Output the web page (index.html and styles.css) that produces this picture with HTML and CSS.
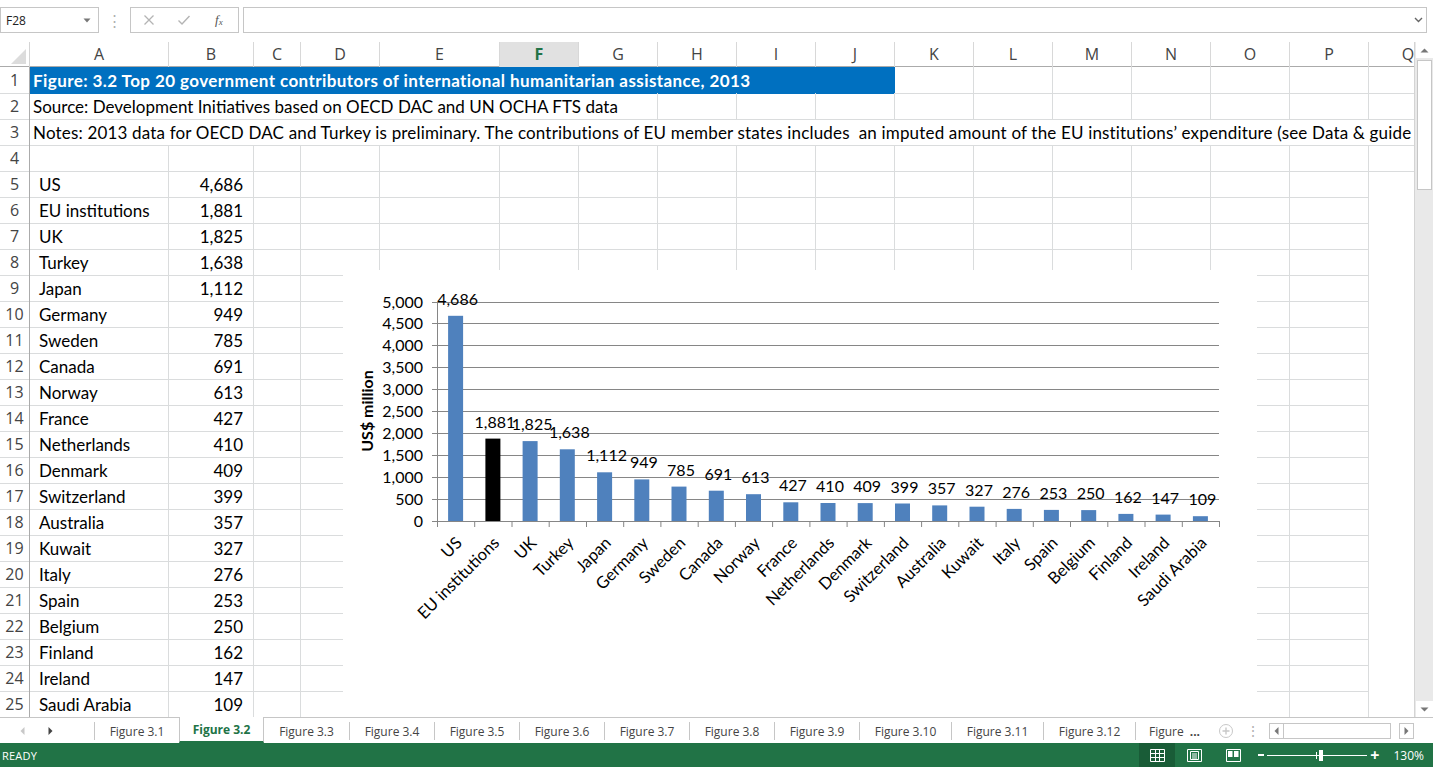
FILE: index.html
```html
<!DOCTYPE html>
<html>
<head>
<meta charset="utf-8">
<title>Figure 3.2</title>
<link rel="stylesheet" href="styles.css">
</head>
<body>
<div class="app">
  <div class="formula-bar">
    <div class="namebox"><span>F28</span><svg class="nb-arrow" width="8" height="5" viewBox="0 0 8 5"><path d="M0.5 0.5 L7.5 0.5 L4 4.5 Z" fill="#777"/></svg></div>
    <div class="fb-dots">⋮</div>
    <div class="fx-box">
      <svg width="12" height="12" viewBox="0 0 12 12"><path d="M1.5 1.5 L10.5 10.5 M10.5 1.5 L1.5 10.5" stroke="#b4b4b4" stroke-width="1.3"/></svg>
      <svg width="14" height="12" viewBox="0 0 14 12"><path d="M1.5 6.5 L5 10 L12.5 2" stroke="#b4b4b4" stroke-width="1.4" fill="none"/></svg>
      <span class="fx">f<sub>x</sub></span>
    </div>
    <div class="formula-input"><svg class="fi-chev" width="9" height="6" viewBox="0 0 9 6"><path d="M1 1 L4.5 4.5 L8 1" stroke="#666" stroke-width="1.4" fill="none"/></svg></div>
  </div>

  <div class="sheet">
    <div class="sheet-main">
      <div class="colhead">
        <div class="corner"><svg width="30" height="25" viewBox="0 0 30 25"><polygon points="26,7 26,22 11,22" fill="#dcdcdc"/></svg></div>
        <div class="h">A</div><div class="h">B</div><div class="h">C</div><div class="h">D</div><div class="h">E</div>
        <div class="h sel">F</div><div class="h">G</div><div class="h">H</div><div class="h">I</div><div class="h">J</div>
        <div class="h">K</div><div class="h">L</div><div class="h">M</div><div class="h">N</div><div class="h">O</div>
        <div class="h">P</div><div class="h">Q</div>
      </div>

      <div class="grid">
        <div class="row"><div class="rn">1</div><div class="c title span10">Figure: 3.2 Top 20 government contributors of international humanitarian assistance, 2013</div><div class="c"></div><div class="c"></div><div class="c"></div><div class="c"></div><div class="c"></div><div class="c"></div><div class="c"></div></div>
        <div class="row"><div class="rn">2</div><div class="c txt span7">Source: Development Initiatives based on OECD DAC and UN OCHA FTS data</div><div class="c"></div><div class="c"></div><div class="c"></div><div class="c"></div><div class="c"></div><div class="c"></div><div class="c"></div><div class="c"></div><div class="c"></div><div class="c"></div></div>
        <div class="row"><div class="rn">3</div><div class="c txt notes span17">Notes: 2013 data for OECD DAC and Turkey is preliminary. The contributions of EU member states includes&nbsp; an imputed amount of the EU institutions’ expenditure (see Data &amp; guide</div></div>
        <div class="row"><div class="rn">4</div><div class="c"></div><div class="c"></div><div class="c"></div><div class="c"></div><div class="c"></div><div class="c"></div><div class="c"></div><div class="c"></div><div class="c"></div><div class="c"></div><div class="c"></div><div class="c"></div><div class="c"></div><div class="c"></div><div class="c"></div><div class="c"></div><div class="c"></div></div>
        <div class="row"><div class="rn">5</div><div class="c name">US</div><div class="c num">4,686</div><div class="c"></div><div class="c"></div><div class="c"></div><div class="c"></div><div class="c"></div><div class="c"></div><div class="c"></div><div class="c"></div><div class="c"></div><div class="c"></div><div class="c"></div><div class="c"></div><div class="c"></div><div class="c"></div></div>
        <div class="row"><div class="rn">6</div><div class="c name">EU institutions</div><div class="c num">1,881</div><div class="c"></div><div class="c"></div><div class="c"></div><div class="c"></div><div class="c"></div><div class="c"></div><div class="c"></div><div class="c"></div><div class="c"></div><div class="c"></div><div class="c"></div><div class="c"></div><div class="c"></div><div class="c"></div></div>
        <div class="row"><div class="rn">7</div><div class="c name">UK</div><div class="c num">1,825</div><div class="c"></div><div class="c"></div><div class="c"></div><div class="c"></div><div class="c"></div><div class="c"></div><div class="c"></div><div class="c"></div><div class="c"></div><div class="c"></div><div class="c"></div><div class="c"></div><div class="c"></div><div class="c"></div></div>
        <div class="row"><div class="rn">8</div><div class="c name">Turkey</div><div class="c num">1,638</div><div class="c"></div><div class="c"></div><div class="c"></div><div class="c"></div><div class="c"></div><div class="c"></div><div class="c"></div><div class="c"></div><div class="c"></div><div class="c"></div><div class="c"></div><div class="c"></div><div class="c"></div><div class="c"></div></div>
        <div class="row"><div class="rn">9</div><div class="c name">Japan</div><div class="c num">1,112</div><div class="c"></div><div class="c"></div><div class="c"></div><div class="c"></div><div class="c"></div><div class="c"></div><div class="c"></div><div class="c"></div><div class="c"></div><div class="c"></div><div class="c"></div><div class="c"></div><div class="c"></div><div class="c"></div></div>
        <div class="row"><div class="rn">10</div><div class="c name">Germany</div><div class="c num">949</div><div class="c"></div><div class="c"></div><div class="c"></div><div class="c"></div><div class="c"></div><div class="c"></div><div class="c"></div><div class="c"></div><div class="c"></div><div class="c"></div><div class="c"></div><div class="c"></div><div class="c"></div><div class="c"></div></div>
        <div class="row"><div class="rn">11</div><div class="c name">Sweden</div><div class="c num">785</div><div class="c"></div><div class="c"></div><div class="c"></div><div class="c"></div><div class="c"></div><div class="c"></div><div class="c"></div><div class="c"></div><div class="c"></div><div class="c"></div><div class="c"></div><div class="c"></div><div class="c"></div><div class="c"></div></div>
        <div class="row"><div class="rn">12</div><div class="c name">Canada</div><div class="c num">691</div><div class="c"></div><div class="c"></div><div class="c"></div><div class="c"></div><div class="c"></div><div class="c"></div><div class="c"></div><div class="c"></div><div class="c"></div><div class="c"></div><div class="c"></div><div class="c"></div><div class="c"></div><div class="c"></div></div>
        <div class="row"><div class="rn">13</div><div class="c name">Norway</div><div class="c num">613</div><div class="c"></div><div class="c"></div><div class="c"></div><div class="c"></div><div class="c"></div><div class="c"></div><div class="c"></div><div class="c"></div><div class="c"></div><div class="c"></div><div class="c"></div><div class="c"></div><div class="c"></div><div class="c"></div></div>
        <div class="row"><div class="rn">14</div><div class="c name">France</div><div class="c num">427</div><div class="c"></div><div class="c"></div><div class="c"></div><div class="c"></div><div class="c"></div><div class="c"></div><div class="c"></div><div class="c"></div><div class="c"></div><div class="c"></div><div class="c"></div><div class="c"></div><div class="c"></div><div class="c"></div></div>
        <div class="row"><div class="rn">15</div><div class="c name">Netherlands</div><div class="c num">410</div><div class="c"></div><div class="c"></div><div class="c"></div><div class="c"></div><div class="c"></div><div class="c"></div><div class="c"></div><div class="c"></div><div class="c"></div><div class="c"></div><div class="c"></div><div class="c"></div><div class="c"></div><div class="c"></div></div>
        <div class="row"><div class="rn">16</div><div class="c name">Denmark</div><div class="c num">409</div><div class="c"></div><div class="c"></div><div class="c"></div><div class="c"></div><div class="c"></div><div class="c"></div><div class="c"></div><div class="c"></div><div class="c"></div><div class="c"></div><div class="c"></div><div class="c"></div><div class="c"></div><div class="c"></div></div>
        <div class="row"><div class="rn">17</div><div class="c name">Switzerland</div><div class="c num">399</div><div class="c"></div><div class="c"></div><div class="c"></div><div class="c"></div><div class="c"></div><div class="c"></div><div class="c"></div><div class="c"></div><div class="c"></div><div class="c"></div><div class="c"></div><div class="c"></div><div class="c"></div><div class="c"></div></div>
        <div class="row"><div class="rn">18</div><div class="c name">Australia</div><div class="c num">357</div><div class="c"></div><div class="c"></div><div class="c"></div><div class="c"></div><div class="c"></div><div class="c"></div><div class="c"></div><div class="c"></div><div class="c"></div><div class="c"></div><div class="c"></div><div class="c"></div><div class="c"></div><div class="c"></div></div>
        <div class="row"><div class="rn">19</div><div class="c name">Kuwait</div><div class="c num">327</div><div class="c"></div><div class="c"></div><div class="c"></div><div class="c"></div><div class="c"></div><div class="c"></div><div class="c"></div><div class="c"></div><div class="c"></div><div class="c"></div><div class="c"></div><div class="c"></div><div class="c"></div><div class="c"></div></div>
        <div class="row"><div class="rn">20</div><div class="c name">Italy</div><div class="c num">276</div><div class="c"></div><div class="c"></div><div class="c"></div><div class="c"></div><div class="c"></div><div class="c"></div><div class="c"></div><div class="c"></div><div class="c"></div><div class="c"></div><div class="c"></div><div class="c"></div><div class="c"></div><div class="c"></div></div>
        <div class="row"><div class="rn">21</div><div class="c name">Spain</div><div class="c num">253</div><div class="c"></div><div class="c"></div><div class="c"></div><div class="c"></div><div class="c"></div><div class="c"></div><div class="c"></div><div class="c"></div><div class="c"></div><div class="c"></div><div class="c"></div><div class="c"></div><div class="c"></div><div class="c"></div></div>
        <div class="row"><div class="rn">22</div><div class="c name">Belgium</div><div class="c num">250</div><div class="c"></div><div class="c"></div><div class="c"></div><div class="c"></div><div class="c"></div><div class="c"></div><div class="c"></div><div class="c"></div><div class="c"></div><div class="c"></div><div class="c"></div><div class="c"></div><div class="c"></div><div class="c"></div></div>
        <div class="row"><div class="rn">23</div><div class="c name">Finland</div><div class="c num">162</div><div class="c"></div><div class="c"></div><div class="c"></div><div class="c"></div><div class="c"></div><div class="c"></div><div class="c"></div><div class="c"></div><div class="c"></div><div class="c"></div><div class="c"></div><div class="c"></div><div class="c"></div><div class="c"></div></div>
        <div class="row"><div class="rn">24</div><div class="c name">Ireland</div><div class="c num">147</div><div class="c"></div><div class="c"></div><div class="c"></div><div class="c"></div><div class="c"></div><div class="c"></div><div class="c"></div><div class="c"></div><div class="c"></div><div class="c"></div><div class="c"></div><div class="c"></div><div class="c"></div><div class="c"></div></div>
        <div class="row"><div class="rn">25</div><div class="c name">Saudi Arabia</div><div class="c num">109</div><div class="c"></div><div class="c"></div><div class="c"></div><div class="c"></div><div class="c"></div><div class="c"></div><div class="c"></div><div class="c"></div><div class="c"></div><div class="c"></div><div class="c"></div><div class="c"></div><div class="c"></div><div class="c"></div></div>

        <div class="chart">
          <svg width="914" height="460" viewBox="343 270 914 460">
            <g class="gridlines" stroke="#868686" stroke-width="1">
              <line x1="432" y1="499.5" x2="1219" y2="499.5"/>
              <line x1="432" y1="477.5" x2="1219" y2="477.5"/>
              <line x1="432" y1="455.5" x2="1219" y2="455.5"/>
              <line x1="432" y1="433.5" x2="1219" y2="433.5"/>
              <line x1="432" y1="411.5" x2="1219" y2="411.5"/>
              <line x1="432" y1="389.5" x2="1219" y2="389.5"/>
              <line x1="432" y1="367.5" x2="1219" y2="367.5"/>
              <line x1="432" y1="345.5" x2="1219" y2="345.5"/>
              <line x1="432" y1="323.5" x2="1219" y2="323.5"/>
              <line x1="432" y1="302.5" x2="1219" y2="302.5"/>
              <line x1="437.5" y1="302" x2="437.5" y2="521"/>
            </g>
            <g class="bars" fill="#4f81bd">
              <rect x="448.1" y="315.8" width="15" height="205.2"/>
              <rect x="485.4" y="438.6" width="15" height="82.4" fill="#000"/>
              <rect x="522.6" y="441.1" width="15" height="79.9"/>
              <rect x="559.8" y="449.3" width="15" height="71.7"/>
              <rect x="597.1" y="472.3" width="15" height="48.7"/>
              <rect x="634.3" y="479.4" width="15" height="41.6"/>
              <rect x="671.5" y="486.6" width="15" height="34.4"/>
              <rect x="708.8" y="490.7" width="15" height="30.3"/>
              <rect x="746.0" y="494.2" width="15" height="26.8"/>
              <rect x="783.3" y="502.3" width="15" height="18.7"/>
              <rect x="820.5" y="503.0" width="15" height="18.0"/>
              <rect x="857.7" y="503.1" width="15" height="17.9"/>
              <rect x="895.0" y="503.5" width="15" height="17.5"/>
              <rect x="932.2" y="505.4" width="15" height="15.6"/>
              <rect x="969.5" y="506.7" width="15" height="14.3"/>
              <rect x="1006.7" y="508.9" width="15" height="12.1"/>
              <rect x="1043.9" y="509.9" width="15" height="11.1"/>
              <rect x="1081.2" y="510.1" width="15" height="10.9"/>
              <rect x="1118.4" y="513.9" width="15" height="7.1"/>
              <rect x="1155.6" y="514.6" width="15" height="6.4"/>
              <rect x="1192.9" y="516.2" width="15" height="4.8"/>
            </g>
            <g class="axis" stroke="#868686" stroke-width="1">
              <line x1="432" y1="521.5" x2="1219" y2="521.5"/>
              <line x1="437.5" y1="521" x2="437.5" y2="527"/>
              <line x1="474.7" y1="521" x2="474.7" y2="527"/>
              <line x1="512.0" y1="521" x2="512.0" y2="527"/>
              <line x1="549.2" y1="521" x2="549.2" y2="527"/>
              <line x1="586.5" y1="521" x2="586.5" y2="527"/>
              <line x1="623.7" y1="521" x2="623.7" y2="527"/>
              <line x1="660.9" y1="521" x2="660.9" y2="527"/>
              <line x1="698.2" y1="521" x2="698.2" y2="527"/>
              <line x1="735.4" y1="521" x2="735.4" y2="527"/>
              <line x1="772.6" y1="521" x2="772.6" y2="527"/>
              <line x1="809.9" y1="521" x2="809.9" y2="527"/>
              <line x1="847.1" y1="521" x2="847.1" y2="527"/>
              <line x1="884.4" y1="521" x2="884.4" y2="527"/>
              <line x1="921.6" y1="521" x2="921.6" y2="527"/>
              <line x1="958.8" y1="521" x2="958.8" y2="527"/>
              <line x1="996.1" y1="521" x2="996.1" y2="527"/>
              <line x1="1033.3" y1="521" x2="1033.3" y2="527"/>
              <line x1="1070.5" y1="521" x2="1070.5" y2="527"/>
              <line x1="1107.8" y1="521" x2="1107.8" y2="527"/>
              <line x1="1145.0" y1="521" x2="1145.0" y2="527"/>
              <line x1="1182.3" y1="521" x2="1182.3" y2="527"/>
              <line x1="1219.5" y1="521" x2="1219.5" y2="527"/>
            </g>
            <g class="ylabels" text-anchor="end">
              <text x="423" y="527">0</text>
              <text x="423" y="505">500</text>
              <text x="423" y="483">1,000</text>
              <text x="423" y="461">1,500</text>
              <text x="423" y="439">2,000</text>
              <text x="423" y="417">2,500</text>
              <text x="423" y="395">3,000</text>
              <text x="423" y="373">3,500</text>
              <text x="423" y="351">4,000</text>
              <text x="423" y="329">4,500</text>
              <text x="423" y="308">5,000</text>
            </g>
            <text class="ytitle" transform="translate(373 411) rotate(-90)" text-anchor="middle">US$ million</text>
            <g class="dlabels" text-anchor="middle">
              <text x="457.6" y="304.7">4,686</text>
              <text x="494.9" y="427.6">1,881</text>
              <text x="532.1" y="430.1">1,825</text>
              <text x="569.3" y="438.3">1,638</text>
              <text x="606.6" y="461.3">1,112</text>
              <text x="643.8" y="468.4">949</text>
              <text x="681.0" y="475.6">785</text>
              <text x="718.3" y="479.7">691</text>
              <text x="755.5" y="483.2">613</text>
              <text x="792.8" y="491.3">427</text>
              <text x="830.0" y="492.0">410</text>
              <text x="867.2" y="492.1">409</text>
              <text x="904.5" y="492.5">399</text>
              <text x="941.7" y="494.4">357</text>
              <text x="979.0" y="495.7">327</text>
              <text x="1016.2" y="497.9">276</text>
              <text x="1053.4" y="498.9">253</text>
              <text x="1090.7" y="499.1">250</text>
              <text x="1127.9" y="502.9">162</text>
              <text x="1165.1" y="503.6">147</text>
              <text x="1202.4" y="505.2">109</text>
            </g>
            <g class="cats" text-anchor="end">
              <text transform="translate(463 544) rotate(-45)">US</text>
              <text transform="translate(500.3 544) rotate(-45)">EU institutions</text>
              <text transform="translate(537.5 544) rotate(-45)">UK</text>
              <text transform="translate(574.7 544) rotate(-45)">Turkey</text>
              <text transform="translate(612.0 544) rotate(-45)">Japan</text>
              <text transform="translate(649.2 544) rotate(-45)">Germany</text>
              <text transform="translate(686.4 544) rotate(-45)">Sweden</text>
              <text transform="translate(723.7 544) rotate(-45)">Canada</text>
              <text transform="translate(760.9 544) rotate(-45)">Norway</text>
              <text transform="translate(798.2 544) rotate(-45)">France</text>
              <text transform="translate(835.4 544) rotate(-45)">Netherlands</text>
              <text transform="translate(872.6 544) rotate(-45)">Denmark</text>
              <text transform="translate(909.9 544) rotate(-45)">Switzerland</text>
              <text transform="translate(947.1 544) rotate(-45)">Australia</text>
              <text transform="translate(984.4 544) rotate(-45)">Kuwait</text>
              <text transform="translate(1021.6 544) rotate(-45)">Italy</text>
              <text transform="translate(1058.8 544) rotate(-45)">Spain</text>
              <text transform="translate(1096.1 544) rotate(-45)">Belgium</text>
              <text transform="translate(1133.3 544) rotate(-45)">Finland</text>
              <text transform="translate(1170.5 544) rotate(-45)">Ireland</text>
              <text transform="translate(1207.8 544) rotate(-45)">Saudi Arabia</text>
            </g>
          </svg>
        </div>
      </div>
    </div>
    <div class="vscroll">
      <div class="sb-btn"><svg width="9" height="5" viewBox="0 0 9 5"><path d="M0.5 4.5 L4.5 0.5 L8.5 4.5 Z" fill="#777"/></svg></div>
      <div class="sb-thumb"></div>
      <div class="sb-track"></div>
      <div class="sb-btn"><svg width="9" height="5" viewBox="0 0 9 5"><path d="M0.5 0.5 L8.5 0.5 L4.5 4.5 Z" fill="#777"/></svg></div>
    </div>
  </div>

  <div class="tabs">
    <div class="tab-nav">
      <svg width="5" height="8" viewBox="0 0 5 8" class="nav-l"><path d="M4.5 0 L4.5 8 L0.5 4 Z" fill="#c8c8c8"/></svg>
      <svg width="5" height="8" viewBox="0 0 5 8" class="nav-r"><path d="M0.5 0 L0.5 8 L4.5 4 Z" fill="#444"/></svg>
    </div>
    <div class="tab">Figure 3.1</div>
    <div class="tab active">Figure 3.2</div>
    <div class="tab">Figure 3.3</div>
    <div class="tab">Figure 3.4</div>
    <div class="tab">Figure 3.5</div>
    <div class="tab">Figure 3.6</div>
    <div class="tab">Figure 3.7</div>
    <div class="tab">Figure 3.8</div>
    <div class="tab">Figure 3.9</div>
    <div class="tab wide">Figure 3.10</div>
    <div class="tab wide">Figure 3.11</div>
    <div class="tab wide">Figure 3.12</div>
    <div class="tab last">Figure <b class="more">...</b></div>
    <div class="tab-add"><svg width="16" height="16" viewBox="0 0 16 16"><circle cx="8" cy="8" r="6.5" stroke="#c8c8c8" fill="none"/><path d="M8 4.5 V11.5 M4.5 8 H11.5" stroke="#c8c8c8" stroke-width="1.4"/></svg></div>
    <div class="tab-dots">⋮</div>
    <div class="hscroll">
      <div class="hs-btn"><svg width="5" height="8" viewBox="0 0 5 8"><path d="M4.5 0 L4.5 8 L0.5 4 Z" fill="#777"/></svg></div>
      <div class="hs-thumb"></div>
      <div class="hs-track"></div>
      <div class="hs-btn"><svg width="5" height="8" viewBox="0 0 5 8"><path d="M0.5 0 L0.5 8 L4.5 4 Z" fill="#777"/></svg></div>
    </div>
  </div>

  <div class="status">
    <span class="ready">READY</span>
    <div class="views">
      <div class="view active"><svg width="15" height="13" viewBox="0 0 15 13"><path d="M0.5 0.5 H14.5 V12.5 H0.5 Z M5.5 0.5 V12.5 M9.5 0.5 V12.5 M0.5 4.5 H14.5 M0.5 8.5 H14.5" stroke="#fff" fill="none"/></svg></div>
      <div class="view"><svg width="15" height="13" viewBox="0 0 15 13"><path d="M0.5 0.5 H14.5 V12.5 H0.5 Z M3.5 2.5 H11.5 V10.5 H3.5 Z M5 5 H10 M5 7 H10 M5 9 H10" stroke="#fff" fill="none"/></svg></div>
      <div class="view wide"><svg width="15" height="13" viewBox="0 0 15 13"><path d="M0.5 0.5 H14.5 V12.5 H0.5 Z" stroke="#fff" fill="none"/><rect x="2" y="2" width="4.5" height="6" fill="#fff"/><rect x="8" y="2" width="4.5" height="6" fill="#fff"/></svg></div>
    </div>
    <div class="zoom">
      <span class="zminus"></span>
      <div class="zline"><span class="zmid"></span><span class="zthumb"></span></div>
      <span class="zplus">+</span>
      <span class="zpct">130%</span>
    </div>
  </div>
</div>
</body>
</html>
```
FILE: styles.css
```css
* { box-sizing: border-box; margin: 0; padding: 0; }
html, body { width: 1433px; height: 767px; overflow: hidden; background: #fff; }
body { font-family: "Open Sans", "Liberation Sans", sans-serif; color: #444; }

.app { display: flex; flex-direction: column; width: 1433px; height: 767px; }

/* formula bar */
.formula-bar { height: 42px; display: flex; align-items: flex-start; padding-top: 7px; flex-shrink: 0; }
.namebox { width: 99px; height: 26px; border: 1px solid #c6c6c6; display: flex; align-items: center; justify-content: space-between; padding: 0 7px 0 5px; font-size: 12px; color: #222; }
.fb-dots { width: 31px; height: 26px; display: flex; align-items: center; justify-content: center; color: #b0b0b0; font-size: 15px; }
.fx-box { width: 109px; height: 26px; border: 1px solid #c6c6c6; display: flex; align-items: center; padding-left: 12px; gap: 22px; }
.fx { font-family: "Liberation Serif", serif; font-style: italic; font-size: 13px; color: #555; margin-left: 2px; }
.fx sub { font-size: 9px; vertical-align: -1px; }
.formula-input { margin-left: 4px; width: 1184px; height: 26px; border: 1px solid #c6c6c6; display: flex; align-items: center; justify-content: flex-end; padding-right: 3px; }

/* sheet */
.sheet { display: flex; height: 675px; flex-shrink: 0; }
.sheet-main { width: 1414px; overflow: hidden; display: flex; flex-direction: column; }
.colhead, .row { display: grid; grid-template-columns: 30px 139px 85px 47px 79px 120px repeat(12, 79px); width: 1448px; }
.colhead { height: 25px; border-bottom: 1px solid #ababab; }
.corner { border-right: 1px solid #d4d4d4; }
.corner svg { display: block; }
.h { border-right: 1px solid #d8d8d8; text-align: center; font-size: 16px; line-height: 24px; color: #444; }
.h.sel { background: #e1e1e1; color: #217346; font-weight: 700; }

.grid { position: relative; height: 650px; overflow: hidden; }
.row { height: 26px; }
.rn { border-right: 1px solid #ababab; border-bottom: 1px solid #dadcdd; text-align: center; font-size: 16px; line-height: 26px; color: #444; }
.c { border-right: 1px solid #dadcdd; border-bottom: 1px solid #dadcdd; font-family: Lato, "Open Sans", sans-serif; font-size: 17px; line-height: 25px; padding-top: 1px; color: #000; white-space: nowrap; overflow: hidden; }
.span10 { grid-column: span 10; }
.span7 { grid-column: span 7; }
.span17 { grid-column: span 17; }
.title { background: #0070c0; color: #fff; font-weight: 700; padding-left: 3px; letter-spacing: 0.42px; border-bottom-color: #0070c0; border-right-color: #0070c0; }
.txt { padding-left: 3px; }
.notes { letter-spacing: 0.17px; }
.name { padding-left: 9px; }
.num { text-align: right; padding-right: 10px; }

/* chart overlay */
.chart { position: absolute; left: 343px; top: 203px; width: 914px; height: 460px; background: #fff; }
.chart svg { display: block; font-family: Lato, "Open Sans", sans-serif; font-size: 16px; fill: #000; }
.cats { font-size: 16.5px; }
.ytitle { font-weight: 700; font-size: 16px; }

/* vertical scrollbar */
.vscroll { width: 19px; background: #e9e9e9; border-left: 1px solid #d4d4d4; display: flex; flex-direction: column; align-items: center; }
.sb-btn { width: 17px; height: 16px; background: #fff; display: flex; align-items: center; justify-content: center; }
.sb-thumb { width: 15px; height: 130px; margin-top: 2px; background: #fff; border: 1px solid #c6c6c6; }
.sb-track { flex: 1; }

/* sheet tabs */
.tabs { height: 26px; display: flex; align-items: stretch; border-top: 1px solid #c6c6c6; font-size: 12px; color: #444; flex-shrink: 0; background: #fff; }
.tab-nav { width: 94px; flex-shrink: 0; display: flex; align-items: center; padding-left: 20px; gap: 23px; }
.tab { width: 85px; flex-shrink: 0; display: flex; align-items: center; justify-content: center; border-left: 1px solid #c6c6c6; margin: 4px 0 3px; }
.tab.wide { width: 92px; }
.tab.active { margin: -1px 0 0; border-left: 1px solid #c6c6c6; border-right: 1px solid #c6c6c6; border-bottom: 2px solid #217346; color: #217346; font-weight: 700; background: #fff; }
.tab.active + .tab { border-left: none; }
.tab.last { width: 80px; gap: 6px; justify-content: flex-start; padding-left: 13px; }
.more { color: #444; font-weight: 700; }
.tab-add { width: 21px; flex-shrink: 0; display: flex; align-items: center; justify-content: center; }
.tab-dots { width: 33px; flex-shrink: 0; display: flex; align-items: center; justify-content: center; color: #b0b0b0; font-size: 14px; }
.hscroll { width: 145px; flex-shrink: 0; display: flex; align-items: center; }
.hs-btn { width: 15px; height: 16px; border: 1px solid #c6c6c6; background: #fff; display: flex; align-items: center; justify-content: center; }
.hs-thumb { width: 107px; height: 16px; border: 1px solid #c6c6c6; border-left: none; background: #fff; }
.hs-track { flex: 1; height: 16px; }

/* status bar */
.status { height: 24px; background: #217346; color: #fff; display: flex; align-items: center; flex-shrink: 0; padding-right: 9px; }
.ready { font-size: 11px; padding-left: 2px; flex: 1; letter-spacing: 0.2px; }
.views { display: flex; height: 24px; }
.view { width: 38px; display: flex; align-items: center; justify-content: center; }
.view.active { background: #195c37; width: 36px; }
.view.wide { width: 40px; }
.zoom { display: flex; align-items: center; }
.zminus { width: 6px; height: 2px; background: #fff; margin-left: 5px; }
.zline { position: relative; width: 100px; height: 1px; background: #fff; margin-left: 3px; }
.zmid { position: absolute; left: 49px; top: -3px; width: 1px; height: 7px; background: #fff; }
.zthumb { position: absolute; left: 52px; top: -5px; width: 4px; height: 11px; background: #fff; }
.zplus { font-size: 16px; font-weight: 700; margin-left: 3px; line-height: 1; }
.zpct { font-size: 12px; margin-left: 14px; }
```
